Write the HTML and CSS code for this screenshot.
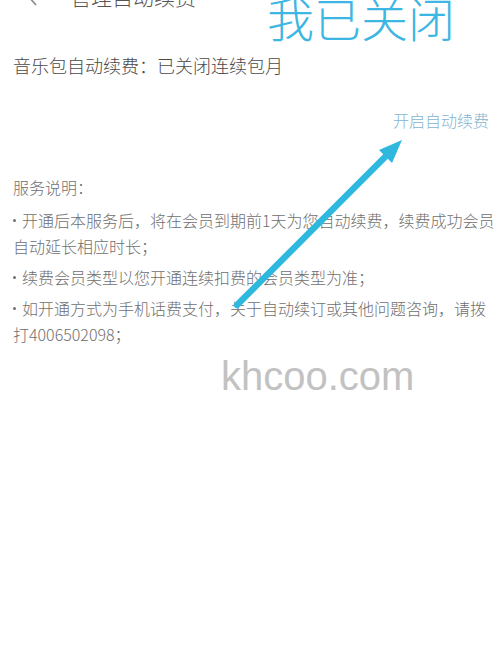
FILE: index.html
```html
<!DOCTYPE html>
<html lang="zh-CN">
<head>
<meta charset="utf-8">
<title>管理自动续费</title>
<link rel="stylesheet" href="styles.css">
</head>
<body>
<div class="page">
  <header class="topbar">
    <span class="back">
      <svg width="14" height="22" viewBox="0 0 14 22"><path d="M11 2 L3 11 L11 20" fill="none" stroke="#888" stroke-width="1.6"/></svg>
    </span>
    <span class="title">管理自动续费</span>
  </header>
  <div class="status">音乐包自动续费：已关闭连续包月</div>
  <div class="action"><span class="open">开启自动续费</span></div>
  <section class="desc">
    <div class="desc-title">服务说明：</div>
    <p class="item">开通后本服务后，将在会员到期前1天为您自动续费，续费成功会员自动延长相应时长；</p>
    <p class="item">续费会员类型以您开通连续扣费的会员类型为准；</p>
    <p class="item">如开通方式为手机话费支付，关于自动续订或其他问题咨询，请拨打4006502098；</p>
  </section>
  <div class="note">我已关闭</div>
  <svg class="arrow" width="500" height="646" viewBox="0 0 500 646">
    <line x1="237" y1="305" x2="390" y2="152" stroke="#2fb8de" stroke-width="6.5" stroke-linecap="round"/>
    <polygon points="402,140 379,150 392,163" fill="#2fb8de"/>
  </svg>
  <div class="watermark">khcoo.com</div>
</div>
</body>
</html>
```
FILE: styles.css
```css
html, body {
  margin: 0;
  padding: 0;
  background: #fff;
}
body {
  font-family: "Noto Sans CJK SC", "Noto Sans", sans-serif;
  font-weight: 300;
  color: #666;
}
.page {
  position: relative;
  width: 500px;
  height: 646px;
  overflow: hidden;
}
.topbar {
  display: flex;
  align-items: center;
  height: 44px;
  margin-top: -26px;
  padding-left: 25px;
}
.back {
  display: flex;
  width: 45px;
}
.title {
  font-size: 21px;
  color: #555;
}
.status {
  margin-top: 34px;
  padding-left: 13px;
  font-size: 18px;
  line-height: 26px;
  color: #4a4a4a;
}
.action {
  display: flex;
  justify-content: flex-end;
  padding-right: 11px;
  margin-top: 29px;
}
.open {
  font-size: 16px;
  line-height: 26px;
  color: #86b4cf;
}
.desc {
  padding: 0 1px 0 13px;
  margin-top: 41px;
  font-size: 16px;
  line-height: 26px;
  color: #707070;
}
.desc-title {
  margin-bottom: 7px;
}
.item {
  margin: 0 0 5px 0;
}
.item::before {
  content: "";
  display: inline-block;
  width: 3px;
  height: 3px;
  border-radius: 50%;
  background: #707070;
  margin-right: 6px;
  vertical-align: 5px;
}
.note {
  position: absolute;
  left: 267px;
  top: -13px;
  font-size: 47px;
  line-height: 60px;
  color: #3cb6e2;
}
.arrow {
  position: absolute;
  left: 0;
  top: 0;
}
.watermark {
  position: absolute;
  left: 221px;
  top: 352px;
  font-family: "Liberation Sans", Arial, sans-serif;
  font-size: 40px;
  line-height: 48px;
  color: #c2c2c2;
}
```
